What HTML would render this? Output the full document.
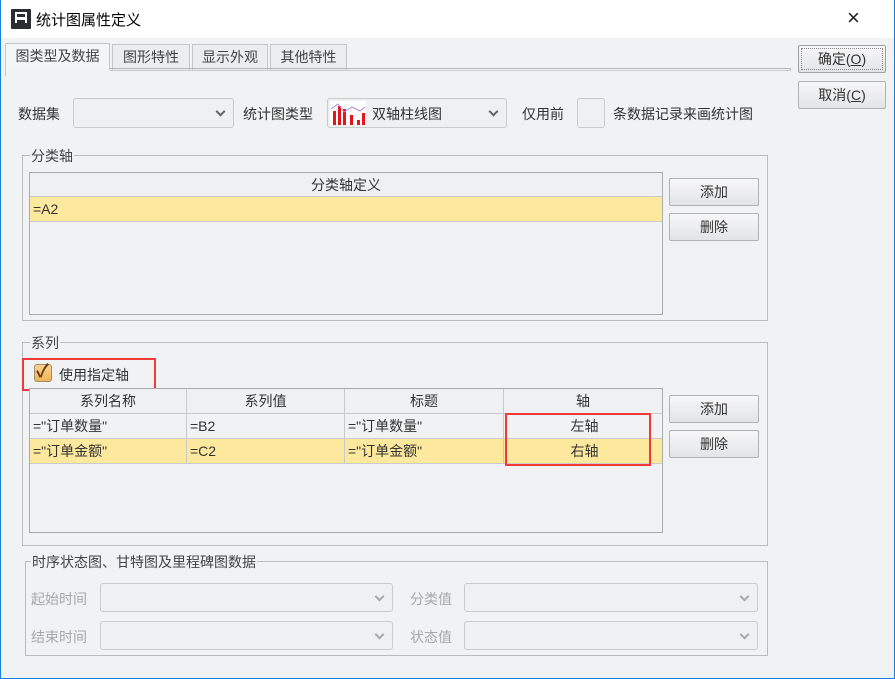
<!DOCTYPE html>
<html><head><meta charset="utf-8"><style>
*{box-sizing:border-box;margin:0;padding:0}
body{width:895px;height:679px;overflow:hidden;background:#f1f2f3;font-family:"Liberation Sans","Noto Sans CJK SC",sans-serif;font-size:14px;color:#333;position:relative}
.a{position:absolute}
.win{left:0;top:0;width:895px;height:679px;border:1px solid #1a7fd6;border-top:none}
.title{left:1px;top:0;width:893px;height:38px;background:#fff}
.tab{top:44px;height:26px;border:1px solid #c4c6c8;border-bottom:none;background:#ecedee;text-align:center;line-height:24px;color:#444;font-size:14px}
.btn{border:1px solid #b0b3b6;border-radius:2px;background:linear-gradient(#f7f7f8,#e3e4e6);text-align:center;color:#333;font-size:14px}
.combo{border:1px solid #c9cbcd;border-radius:3px;background:#eef0f1}
.chev{position:absolute;right:9px;top:50%;width:7px;height:7px;border-right:2px solid #666;border-bottom:2px solid #666;transform:translateY(-70%) rotate(45deg)}
.grp{border:1px solid #b9bbbd}
.leg{background:#f1f2f3;padding:0 1px;font-size:14px;color:#444}
.tbl{border:1px solid #a9acae;background:#f1f2f3}
.cell{position:absolute;border-right:1px solid #c8cacc;border-bottom:1px solid #c8cacc;font-size:14px;line-height:24px;padding-left:3px;color:#333}
.hd{background:#eff0f1;text-align:center;padding:0}
.y{background:#fde99d}
.dis{color:#a6a8aa}
.red{border:2px solid #f03a3a}
</style></head><body>
<div class="a win"></div>
<div class="a title"></div>
<div class="a" style="left:11px;top:9px;width:20px;height:20px;background:#2b2d30;border-radius:1px"><div class="a" style="left:4px;top:3px;width:12px;height:11px;border:2.5px solid #fff;border-bottom:none"></div><div class="a" style="left:4px;top:8px;width:12px;height:3px;background:#fff"></div></div>
<div class="a" style="left:36px;top:9px;font-size:15px;color:#000">统计图属性定义</div>
<div class="a" style="left:847px;top:5px;font-size:22px;color:#222;font-weight:300">×</div>

<div class="a tab" style="left:5px;width:105px;background:#f4f5f6;height:27px;top:43px">图类型及数据</div>
<div class="a tab" style="left:112px;width:78px">图形特性</div>
<div class="a tab" style="left:192px;width:76px">显示外观</div>
<div class="a tab" style="left:270px;width:77px">其他特性</div>
<div class="a" style="left:110px;top:68px;width:681px;height:3px;border-top:1px solid #b5b7b9;border-bottom:1px solid #c8cacc;border-right:1px solid #c8cacc"></div>
<div class="a" style="left:5px;top:70px;width:1px;height:6px;background:#c4c6c8"></div>

<div class="a btn" style="left:798px;top:45px;width:88px;height:28px;line-height:26px;border-color:#9fa2a5"><div class="a" style="left:2px;top:2px;right:2px;bottom:2px;border:1px dotted #888"></div>确定(<u>O</u>)</div>
<div class="a btn" style="left:798px;top:81px;width:88px;height:28px;line-height:26px">取消(<u>C</u>)</div>

<div class="a" style="left:18px;top:104px">数据集</div>
<div class="a combo" style="left:73px;top:98px;width:161px;height:30px"><div class="chev"></div></div>
<div class="a" style="left:243px;top:104px">统计图类型</div>
<div class="a combo" style="left:327px;top:98px;width:180px;height:30px">
<svg class="a" style="left:2px;top:2px" width="36" height="24"><rect width="36" height="24" fill="#fff"/><g fill="#e8141c"><rect x="3" y="10" width="3" height="14"/><rect x="8" y="5" width="3" height="19"/><rect x="13" y="8" width="3" height="16"/><rect x="20" y="14" width="3" height="10"/><rect x="27" y="19" width="3" height="5"/><rect x="32" y="12" width="3" height="12"/></g><polyline points="1,8 8,3 14,11 22,6 30,10 35,6" fill="none" stroke="#b48ad8" stroke-width="1"/></svg>
<div class="a" style="left:44px;top:5px">双轴柱线图</div><div class="chev"></div></div>
<div class="a" style="left:522px;top:104px">仅用前</div>
<div class="a combo" style="left:577px;top:98px;width:28px;height:30px"></div>
<div class="a" style="left:613px;top:104px">条数据记录来画统计图</div>

<div class="a grp" style="left:22px;top:155px;width:746px;height:166px"></div>
<div class="a leg" style="left:30px;top:146px">分类轴</div>
<div class="a tbl" style="left:29px;top:172px;width:634px;height:143px"></div>
<div class="a cell hd" style="left:30px;top:173px;width:632px;height:24px;border-right:none">分类轴定义</div>
<div class="a cell y" style="left:30px;top:197px;width:632px;height:25px;border-right:none">=A2</div>
<div class="a btn" style="left:669px;top:178px;width:90px;height:28px;line-height:26px">添加</div>
<div class="a btn" style="left:669px;top:213px;width:90px;height:28px;line-height:26px">删除</div>

<div class="a grp" style="left:22px;top:342px;width:746px;height:204px"></div>
<div class="a leg" style="left:30px;top:333px">系列</div>
<div class="a" style="left:34px;top:364px;width:18px;height:18px;border:1px solid #a08b6a;border-radius:3px;background:linear-gradient(#fbd48e,#f0b458)"></div>
<div class="a" style="left:36px;top:357px;font-size:18px;color:#6a3c14;font-weight:bold">✓</div>
<div class="a" style="left:59px;top:365px">使用指定轴</div>
<div class="a red" style="left:22px;top:358px;width:134px;height:33px"></div>
<div class="a tbl" style="left:29px;top:388px;width:634px;height:145px"></div>
<div class="a cell hd" style="left:30px;top:389px;width:157px;height:25px">系列名称</div>
<div class="a cell hd" style="left:187px;top:389px;width:158px;height:25px">系列值</div>
<div class="a cell hd" style="left:345px;top:389px;width:159px;height:25px">标题</div>
<div class="a cell hd" style="left:504px;top:389px;width:158px;height:25px;border-right:none">轴</div>
<div class="a cell" style="left:30px;top:414px;width:157px;height:25px">="订单数量"</div>
<div class="a cell" style="left:187px;top:414px;width:158px;height:25px">=B2</div>
<div class="a cell" style="left:345px;top:414px;width:159px;height:25px">="订单数量"</div>
<div class="a cell" style="left:504px;top:414px;width:158px;height:25px;text-align:center;border-right:none">左轴</div>
<div class="a cell y" style="left:30px;top:439px;width:157px;height:25px">="订单金额"</div>
<div class="a cell y" style="left:187px;top:439px;width:158px;height:25px">=C2</div>
<div class="a cell y" style="left:345px;top:439px;width:159px;height:25px">="订单金额"</div>
<div class="a cell y" style="left:504px;top:439px;width:158px;height:25px;text-align:center;border-right:none">右轴</div>
<div class="a red" style="left:505px;top:413px;width:146px;height:53px"></div>
<div class="a btn" style="left:669px;top:395px;width:90px;height:28px;line-height:26px">添加</div>
<div class="a btn" style="left:669px;top:430px;width:90px;height:28px;line-height:26px">删除</div>

<div class="a grp" style="left:25px;top:561px;width:743px;height:95px"></div>
<div class="a leg" style="left:31px;top:552px">时序状态图、甘特图及里程碑图数据</div>
<div class="a dis" style="left:31px;top:589px">起始时间</div>
<div class="a combo" style="left:100px;top:583px;width:293px;height:29px"><div class="chev" style="border-color:#aaa"></div></div>
<div class="a dis" style="left:410px;top:589px">分类值</div>
<div class="a combo" style="left:464px;top:583px;width:294px;height:29px"><div class="chev" style="border-color:#aaa"></div></div>
<div class="a dis" style="left:31px;top:627px">结束时间</div>
<div class="a combo" style="left:100px;top:621px;width:293px;height:29px"><div class="chev" style="border-color:#aaa"></div></div>
<div class="a dis" style="left:410px;top:627px">状态值</div>
<div class="a combo" style="left:464px;top:621px;width:294px;height:29px"><div class="chev" style="border-color:#aaa"></div></div>
</body></html>
